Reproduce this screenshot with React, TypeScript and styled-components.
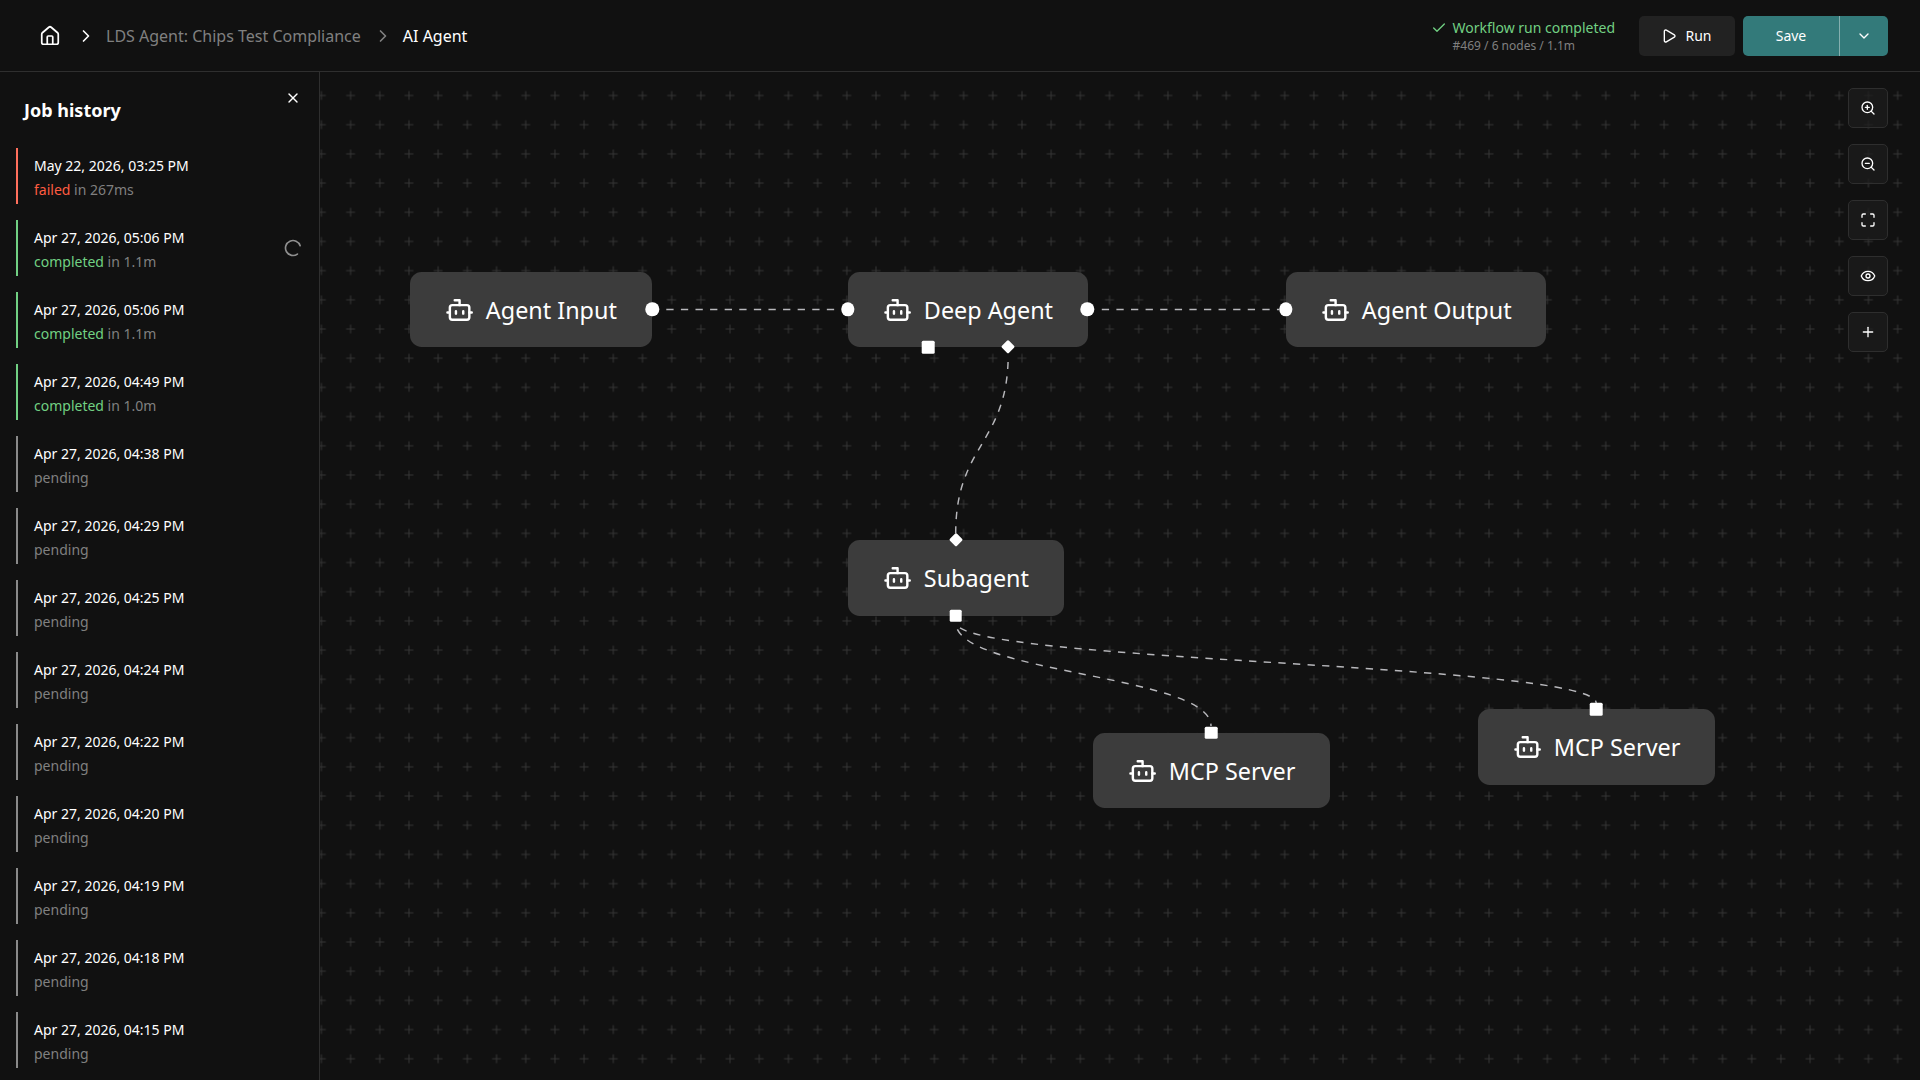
import React from "react";
import styled, { createGlobalStyle } from "styled-components";
import {
  Check,
  ChevronDown,
  ChevronRight,
  Eye,
  House,
  LoaderCircle,
  Maximize,
  Play,
  Plus,
  X,
  ZoomIn,
  ZoomOut,
} from "lucide-react";

const color = {
  bg: "#111111",
  line: "#2f2f2f",
  text: "#ffffff",
  muted: "#808080",
  node: "#3c3c3c",
  green: "#71d083",
  red: "#ff5c41",
  teal: "#337a7a",
};

const ZOOM = 1.4595;

const GlobalStyle = createGlobalStyle`
  * { box-sizing: border-box; }
  body {
    margin: 0;
    background: ${color.bg};
    color: ${color.text};
    font-family: "Noto Sans", sans-serif;
    font-size: 14px;
  }
  button { font: inherit; color: inherit; border: 0; padding: 0; }
`;

const Page = styled.div`
  display: flex;
  flex-direction: column;
  width: 100%;
  height: 100vh;
  overflow: hidden;
`;

const Header = styled.header`
  display: flex;
  align-items: center;
  justify-content: space-between;
  flex: none;
  height: 72px;
  padding: 0 32px 0 39px;
  border-bottom: 1px solid ${color.line};
`;

const Breadcrumbs = styled.nav`
  display: flex;
  align-items: center;
  gap: 12px;
  font-size: 16px;
  svg { flex: none; }
`;

const HomeLink = styled.a`
  display: flex;
  margin-right: 3px;
`;

const Crumb = styled.span<{ $active?: boolean }>`
  margin-left: -2px;
  color: ${(p) => (p.$active ? color.text : color.muted)};
  white-space: nowrap;
`;

const Actions = styled.div`
  display: flex;
  align-items: center;
  gap: 8px;
`;

const Status = styled.div`
  display: flex;
  gap: 6px;
  margin-right: 16px;
  color: ${color.green};
  svg { margin-top: 2px; }
`;

const StatusText = styled.div`
  display: flex;
  flex-direction: column;
  height: 35px;
  line-height: 19px;
`;

const StatusDetail = styled.span`
  color: ${color.muted};
  font-size: 12px;
  line-height: 18px;
`;

const RunButton = styled.button`
  display: flex;
  align-items: center;
  justify-content: center;
  gap: 8px;
  width: 96px;
  height: 40px;
  padding-right: 1px;
  border-radius: 5px;
  background: #222222;
`;

const SplitButton = styled.div`
  display: flex;
  height: 40px;
  border-radius: 5px;
  overflow: hidden;
  background: ${color.teal};
`;

const SaveButton = styled.button`
  width: 96px;
  background: none;
`;

const SaveMenuButton = styled.button`
  display: flex;
  align-items: center;
  justify-content: center;
  width: 49px;
  border-left: 1px solid #85afaf;
  background: none;
`;

const Body = styled.div`
  display: flex;
  flex: 1;
  min-height: 0;
`;

const Sidebar = styled.aside`
  flex: none;
  width: 320px;
  border-right: 1px solid ${color.line};
  overflow: hidden;
`;

const SidebarHead = styled.div`
  display: flex;
  justify-content: space-between;
  height: 76px;
  padding: 18px 18px 0 24px;
`;

const Title = styled.h2`
  margin: 7px 0 0;
  font-size: 18px;
  font-weight: 700;
  line-height: 27px;
`;

const CloseButton = styled.button`
  display: flex;
  height: 16px;
  background: none;
`;

const JobList = styled.div`
  display: flex;
  flex-direction: column;
  gap: 16px;
  padding: 0 16px;
`;

type JobStatus = "failed" | "completed" | "pending";

const barColor: Record<JobStatus, string> = {
  failed: "#ff6f5c",
  completed: color.green,
  pending: "#8a8a8a",
};

const statusColor: Record<JobStatus, string> = {
  failed: color.red,
  completed: color.green,
  pending: color.muted,
};

const JobRow = styled.div<{ $status: JobStatus }>`
  display: flex;
  align-items: center;
  justify-content: space-between;
  flex: none;
  height: 56px;
  padding: 0 0 0 16px;
  border-left: 2px solid ${(p) => barColor[p.$status]};
`;

const JobText = styled.div`
  display: flex;
  flex-direction: column;
  padding-top: 4px;
  line-height: 24px;
`;

const JobResult = styled.span`
  color: ${color.muted};
`;

const JobState = styled.span<{ $status: JobStatus }>`
  color: ${(p) => statusColor[p.$status]};
`;

const Spinner = styled(LoaderCircle)`
  color: #8f8f8f;
  transform: rotate(54deg);
`;

const Canvas = styled.main`
  position: relative;
  flex: 1;
  overflow: hidden;
`;

const Overlay = styled.svg`
  position: absolute;
  inset: 0;
  width: 100%;
  height: 100%;
`;

const Node = styled.div<{ $x: number; $y: number; $w: number; $h: number }>`
  position: absolute;
  left: ${(p) => p.$x}px;
  top: ${(p) => p.$y}px;
  display: flex;
  align-items: center;
  width: ${(p) => p.$w}px;
  height: ${(p) => p.$h}px;
  padding-left: 34.8px;
  border-radius: 11.7px;
  background: ${color.node};
`;

const NodeContent = styled.div`
  display: flex;
  align-items: center;
  gap: 8px;
  font-size: 16px;
  white-space: nowrap;
  transform: scale(${ZOOM});
  transform-origin: 0 50%;
  svg { flex: none; }
`;

type Shape = "circle" | "square" | "diamond";

const handleSize: Record<Shape, number> = { circle: 13.4, square: 12.6, diamond: 10.4 };

const Handle = styled.span<{ $x: number; $y: number; $shape: Shape }>`
  position: absolute;
  left: ${(p) => p.$x}px;
  top: ${(p) => p.$y}px;
  width: ${(p) => handleSize[p.$shape]}px;
  height: ${(p) => handleSize[p.$shape]}px;
  border-radius: ${(p) => (p.$shape === "circle" ? "50%" : "1.5px")};
  background: #ffffff;
  transform: translate(-50%, -50%) ${(p) => (p.$shape === "diamond" ? "rotate(45deg)" : "")};
`;

const Toolbar = styled.div`
  position: absolute;
  top: 16px;
  right: 32px;
  display: flex;
  flex-direction: column;
  gap: 16px;
`;

const ToolButton = styled.button`
  display: flex;
  align-items: center;
  justify-content: center;
  width: 40px;
  height: 40px;
  border: 1px solid #2e2e2e;
  border-radius: 5px;
  background: rgba(28, 28, 28, 0.7);
`;

const BotIcon = () => (
  <svg width="20" height="20" viewBox="0 0 24 24" fill="none" stroke="currentColor" strokeWidth="2" strokeLinecap="round" strokeLinejoin="round">
    <path d="M12 8V4H8" />
    <rect width="16" height="12" x="4" y="8" rx="2" />
    <path d="M2 14h2M20 14h2M15 13v2M9 13v2" />
  </svg>
);

const jobs: { time: string; status: JobStatus; duration?: string; loading?: boolean }[] = [
  { time: "May 22, 2026, 03:25 PM", status: "failed", duration: "267ms" },
  { time: "Apr 27, 2026, 05:06 PM", status: "completed", duration: "1.1m", loading: true },
  { time: "Apr 27, 2026, 05:06 PM", status: "completed", duration: "1.1m" },
  { time: "Apr 27, 2026, 04:49 PM", status: "completed", duration: "1.0m" },
  { time: "Apr 27, 2026, 04:38 PM", status: "pending" },
  { time: "Apr 27, 2026, 04:29 PM", status: "pending" },
  { time: "Apr 27, 2026, 04:25 PM", status: "pending" },
  { time: "Apr 27, 2026, 04:24 PM", status: "pending" },
  { time: "Apr 27, 2026, 04:22 PM", status: "pending" },
  { time: "Apr 27, 2026, 04:20 PM", status: "pending" },
  { time: "Apr 27, 2026, 04:19 PM", status: "pending" },
  { time: "Apr 27, 2026, 04:18 PM", status: "pending" },
  { time: "Apr 27, 2026, 04:15 PM", status: "pending" },
];

const nodes = [
  { label: "Agent Input", x: 90, y: 200, w: 242, h: 75 },
  { label: "Deep Agent", x: 528, y: 200, w: 240, h: 75 },
  { label: "Agent Output", x: 966, y: 200, w: 260, h: 75 },
  { label: "Subagent", x: 528, y: 468, w: 216, h: 76 },
  { label: "MCP Server", x: 773, y: 661, w: 237, h: 75 },
  { label: "MCP Server", x: 1158, y: 637, w: 237, h: 76 },
];

const handles: { x: number; y: number; shape: Shape }[] = [
  { x: 332.2, y: 237.4, shape: "circle" },
  { x: 527.8, y: 237.4, shape: "circle" },
  { x: 767.2, y: 237.4, shape: "circle" },
  { x: 965.5, y: 237.4, shape: "circle" },
  { x: 608, y: 275.4, shape: "square" },
  { x: 688.2, y: 275.4, shape: "diamond" },
  { x: 635.6, y: 468.1, shape: "diamond" },
  { x: 635.6, y: 543.8, shape: "square" },
  { x: 891, y: 660.6, shape: "square" },
  { x: 1276.2, y: 637.3, shape: "square" },
];

const edges = [
  "M339 237.4H521",
  "M774.5 237.4H959",
  "M688.2 282.4C688.2 371.8 635.7 371.8 635.7 461.4",
  "M635.7 550.4C635.7 602.2 891 602.2 891 654",
  "M635.7 550.4C635.7 590.7 1276.2 590.7 1276.2 631",
];

const tools = [ZoomIn, ZoomOut, Maximize, Eye, Plus];
const GRID = 20 * ZOOM;
const DASH = 5 * ZOOM;

export default function App() {
  return (
    <Page>
      <GlobalStyle />
      <Header>
        <Breadcrumbs>
          <HomeLink>
            <House size={22} strokeWidth={1.9} />
          </HomeLink>
          <ChevronRight size={20} />
          <Crumb>LDS Agent: Chips Test Compliance</Crumb>
          <ChevronRight size={20} color={color.muted} />
          <Crumb $active>AI Agent</Crumb>
        </Breadcrumbs>
        <Actions>
          <Status>
            <Check size={16} />
            <StatusText>
              Workflow run completed
              <StatusDetail>#469 / 6 nodes / 1.1m</StatusDetail>
            </StatusText>
          </Status>
          <RunButton>
            <Play size={16} />
            Run
          </RunButton>
          <SplitButton>
            <SaveButton>Save</SaveButton>
            <SaveMenuButton>
              <ChevronDown size={16} />
            </SaveMenuButton>
          </SplitButton>
        </Actions>
      </Header>
      <Body>
        <Sidebar>
          <SidebarHead>
            <Title>Job history</Title>
            <CloseButton>
              <X size={16} />
            </CloseButton>
          </SidebarHead>
          <JobList>
            {jobs.map((job, i) => (
              <JobRow key={i} $status={job.status}>
                <JobText>
                  <span>{job.time}</span>
                  <JobResult>
                    <JobState $status={job.status}>{job.status}</JobState>
                    {job.duration ? ` in ${job.duration}` : ""}
                  </JobResult>
                </JobText>
                {job.loading && <Spinner size={20} strokeWidth={2} />}
              </JobRow>
            ))}
          </JobList>
        </Sidebar>
        <Canvas>
          <Overlay>
            <defs>
              <pattern id="grid" x={1.4 - GRID / 2} y={23.5 - GRID / 2} width={GRID} height={GRID} patternUnits="userSpaceOnUse">
                <path
                  d={`M${GRID / 2} ${GRID / 2 - 4.38}v8.76M${GRID / 2 - 4.38} ${GRID / 2}h8.76`}
                  stroke="#363636"
                  strokeWidth="1"
                />
              </pattern>
            </defs>
            <rect width="100%" height="100%" fill="url(#grid)" />
            {edges.map((d) => (
              <path
                key={d}
                d={d}
                fill="none"
                stroke="#b8b8bc"
                strokeWidth={ZOOM}
                strokeDasharray={DASH}
                strokeDashoffset={DASH}
              />
            ))}
          </Overlay>
          {nodes.map((n, i) => (
            <Node key={i} $x={n.x} $y={n.y} $w={n.w} $h={n.h}>
              <NodeContent>
                <BotIcon />
                {n.label}
              </NodeContent>
            </Node>
          ))}
          {handles.map((h, i) => (
            <Handle key={i} $x={h.x} $y={h.y} $shape={h.shape} />
          ))}
          <Toolbar>
            {tools.map((Icon, i) => (
              <ToolButton key={i}>
                <Icon size={16} />
              </ToolButton>
            ))}
          </Toolbar>
        </Canvas>
      </Body>
    </Page>
  );
}
